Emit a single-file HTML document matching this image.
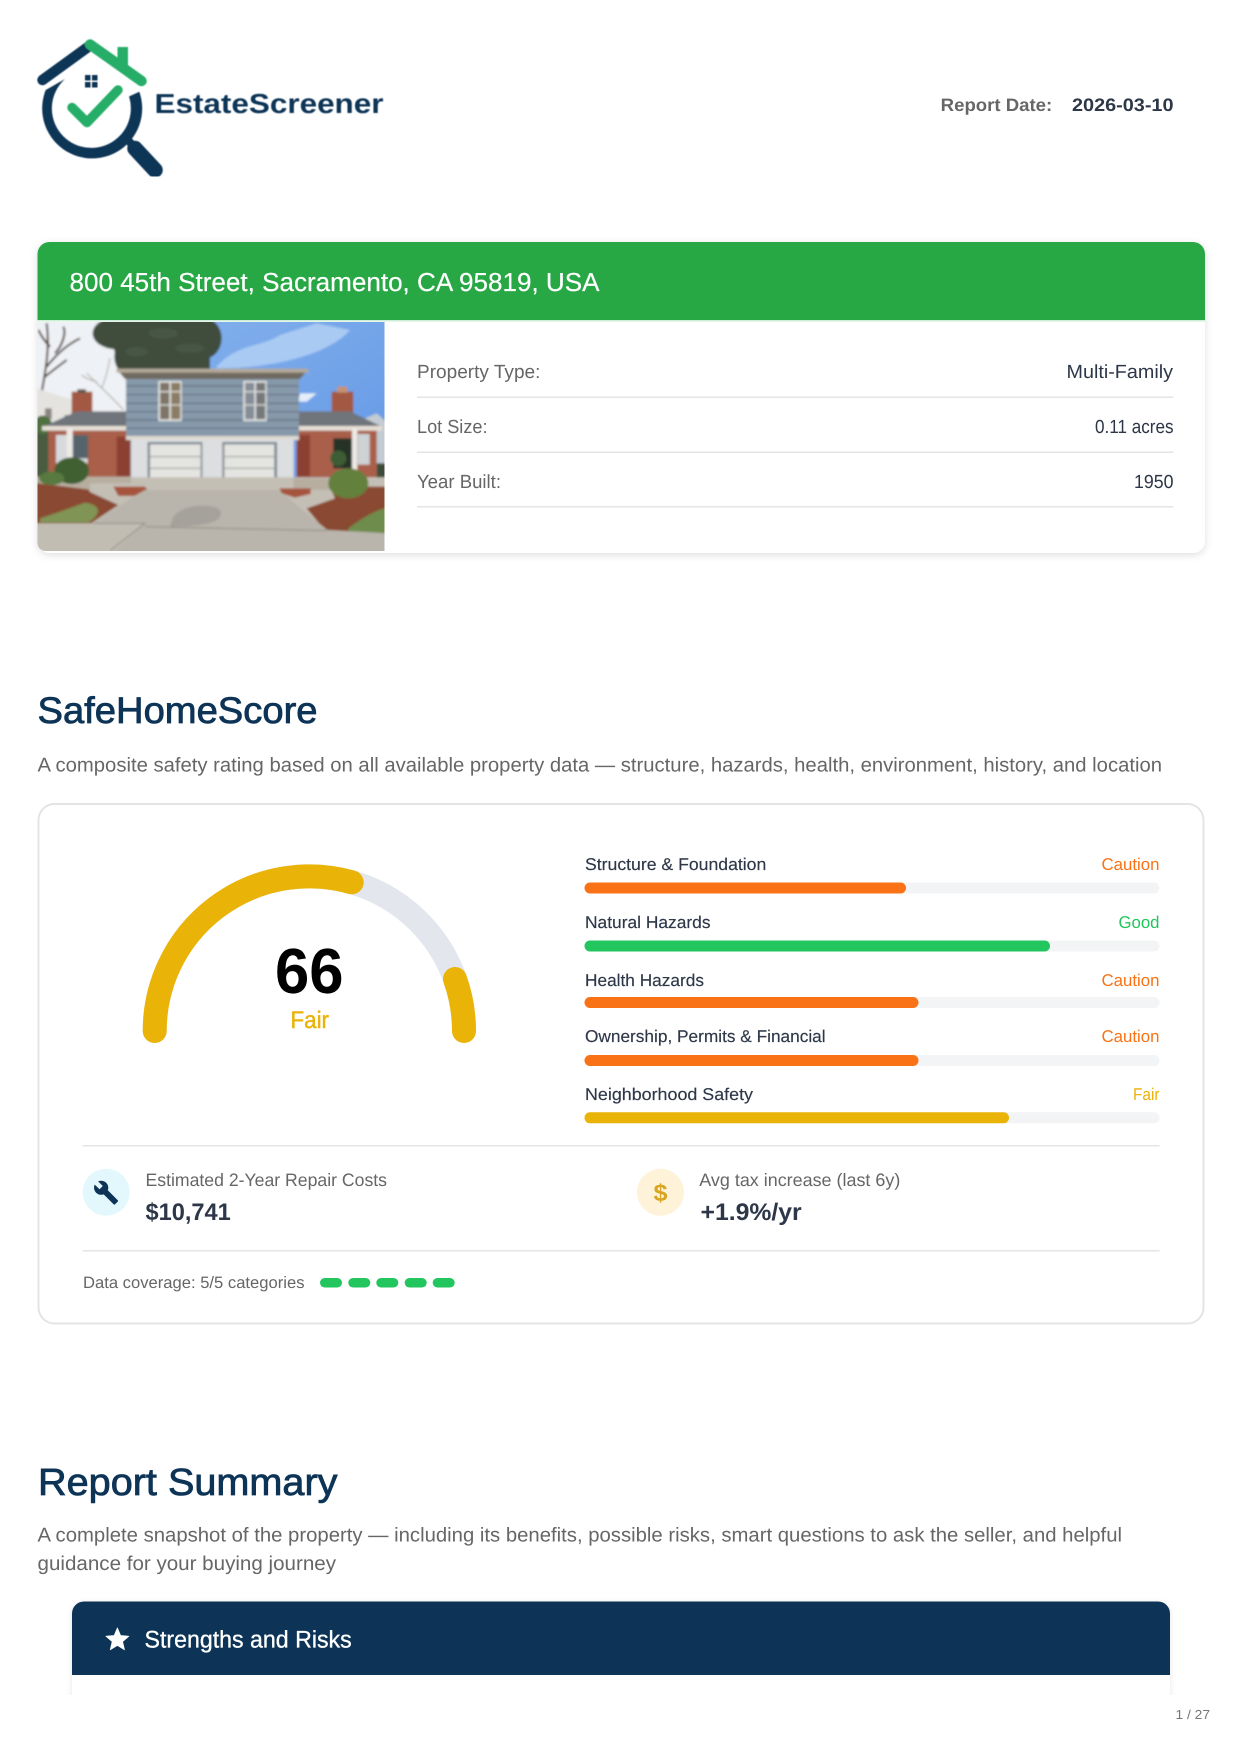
<!DOCTYPE html>
<html lang="en">
<head>
<meta charset="utf-8">
<title>EstateScreener Report</title>
<style>
html,body{margin:0;padding:0;background:#fff;width:1242px;height:1754px;overflow:hidden}
svg{display:block}
text{font-family:"Liberation Sans",Arial,sans-serif;text-rendering:geometricPrecision}
.semi{stroke-width:.45px;paint-order:stroke}
.title{stroke-width:.8px;paint-order:stroke}
</style>
</head>
<body>
<svg xmlns="http://www.w3.org/2000/svg" width="1242" height="1754" viewBox="0 0 1242 1754">
<defs>
  <filter id="soft" x="-5%" y="-5%" width="110%" height="110%"><feGaussianBlur stdDeviation=".45"/></filter>
  <filter id="photoBlur" x="0" y="0" width="100%" height="100%"><feGaussianBlur stdDeviation="1"/></filter>
  <filter id="shadow" x="-5%" y="-10%" width="110%" height="120%"><feDropShadow dx="0" dy="2" stdDeviation="4" flood-color="#000" flood-opacity=".13"/></filter>
  <filter id="shadow2" x="-5%" y="-10%" width="110%" height="120%"><feDropShadow dx="0" dy="1" stdDeviation="3" flood-color="#000" flood-opacity=".10"/></filter>
  <clipPath id="photoClip"><path d="M37.500 322H384.500V551H45.500a8 8 0 0 1-8-8Z"/></clipPath>
  <clipPath id="pageClip"><rect x="0" y="0" width="1242" height="1695"/></clipPath>
  <linearGradient id="sky" x1="0" y1="0" x2="1" y2="1"><stop offset="0" stop-color="#8db7ee"/><stop offset="1" stop-color="#5b93e4"/></linearGradient>
</defs>

<!-- Logo -->
<g filter="url(#soft)">
  <path d="M65 79L45.700 90A50 50 0 1 0 139.300 91.700L129 96.500A39.500 39.500 0 1 1 65 79Z" fill="#0f3557"/>
  <path d="M42.500 80L88 47" fill="none" stroke="#0f3557" stroke-width="10.500" stroke-linecap="round"/>
  <path d="M90 44.500L141.500 81" fill="none" stroke="#27ae68" stroke-width="10.500" stroke-linecap="round"/>
  <path d="M117.500 47H128V67H117.500Z" fill="#27ae68"/>
  <path d="M85 75h5.500v5.500H85ZM92 75h5.500v5.500H92ZM85 82h5.500v5.500H85ZM92 82h5.500v5.500H92Z" fill="#0f3557"/>
  <path d="M72 107.500L87 122.500L118 90" fill="none" stroke="#27ae68" stroke-width="9.500" stroke-linecap="round" stroke-linejoin="round"/>
  <path d="M127 139L136 149" stroke="#0f3557" stroke-width="8" fill="none"/>
  <path d="M135 148.500L155 170" stroke="#0f3557" stroke-width="15.500" stroke-linecap="round" fill="none"/>
  <text x="154.500" y="113" font-size="27.500" font-weight="700" fill="#0f3557" textLength="229" lengthAdjust="spacingAndGlyphs">EstateScreener</text>
</g>

<!-- Report date -->
<text x="940.700" y="111" font-size="18" font-weight="700" fill="#666" textLength="111.500" lengthAdjust="spacingAndGlyphs">Report Date:</text>
<text x="1072" y="111" font-size="18" font-weight="700" fill="#2d3748" textLength="101.500" lengthAdjust="spacingAndGlyphs">2026-03-10</text>

<!-- Property card -->
<rect x="37.500" y="242" width="1167.500" height="311" rx="12" fill="#fff" filter="url(#shadow)"/>
<path d="M49.500 242H1193a12 12 0 0 1 12 12V320H37.500V254a12 12 0 0 1 12-12Z" fill="#28a745"/>
<rect x="37.500" y="320" width="1167.500" height="1.500" fill="#cdeed6"/>
<text x="69.500" y="291" font-size="26" fill="#fff" stroke="#fff" stroke-width=".2" textLength="530" lengthAdjust="spacingAndGlyphs">800 45th Street, Sacramento, CA 95819, USA</text>

<!-- Photo -->
<g clip-path="url(#photoClip)">
 <g filter="url(#photoBlur)">
 <g transform="translate(30 310) scale(.33333)">
  <rect x="10" y="25" width="1070" height="710" fill="url(#sky)"/>
  <path d="M10 25H330L300 330H10Z" fill="#eef1f5"/>
  <path d="M560 170C620 100 700 110 750 75L860 40L960 60C900 130 740 175 560 175Z" fill="#a9caf3"/>
  <path d="M810 250H860L830 275H805Z" fill="#e4eefb"/>
  <!-- evergreen tree -->
  <g fill="#3f4e3d">
    <ellipse cx="260" cy="70" rx="72" ry="48"/>
    <ellipse cx="340" cy="100" rx="90" ry="85"/>
    <ellipse cx="440" cy="90" rx="105" ry="95"/>
    <ellipse cx="520" cy="85" rx="55" ry="62"/>
    <ellipse cx="285" cy="140" rx="32" ry="48"/>
    <rect x="270" y="130" width="270" height="55"/>
  </g>
  <g fill="#566651" opacity=".35">
    <ellipse cx="400" cy="70" rx="44" ry="16"/>
    <ellipse cx="480" cy="115" rx="44" ry="14"/>
    <ellipse cx="320" cy="125" rx="34" ry="14"/>
  </g>
  <!-- bare trees -->
  <path d="M28 290C40 210 62 130 50 40M50 170C90 120 120 100 150 85M60 110C40 90 30 70 25 60M45 200C70 180 90 165 110 150M75 130C95 110 110 70 100 50" stroke="#4a3a32" stroke-width="6" fill="none"/>
  <path d="M170 190C210 230 250 265 280 300M215 235C230 200 235 170 240 145M200 215C180 210 165 205 155 195" stroke="#a9a29c" stroke-width="3" fill="none"/>
  <!-- left white house -->
  <path d="M10 232L125 268V345H10Z" fill="#e4e3e0"/>
  <rect x="45" y="295" width="20" height="32" fill="#8a8581"/>
  <rect x="104" y="315" width="16" height="20" fill="#8a8581"/>
  <!-- chimneys -->
  <rect x="125" y="245" width="62" height="85" fill="#a25842"/>
  <rect x="142" y="238" width="26" height="10" fill="#5c5650"/>
  <rect x="905" y="245" width="65" height="80" fill="#a25842"/>
  <rect x="922" y="230" width="30" height="18" fill="#c99070"/>
  <!-- distant right -->
  <path d="M970 340L1040 310L1080 345V540H1000Z" fill="#c3cbd3"/>
  <rect x="1040" y="460" width="30" height="60" fill="#3e4c38"/>
  <!-- far left greenery -->
  <rect x="10" y="345" width="50" height="175" fill="#4a5c40"/>
  <circle cx="38" cy="345" r="28" fill="#4f7040"/>
  <!-- side roofs -->
  <path d="M40 350L140 304H295V350Z" fill="#70747c"/>
  <path d="M800 304H960L1055 350H800Z" fill="#70747c"/>
  <rect x="36" y="348" width="255" height="14" fill="#e6dfd6"/>
  <rect x="800" y="348" width="256" height="14" fill="#e6dfd6"/>
  <!-- brick -->
  <rect x="55" y="362" width="240" height="140" fill="#a95e48"/>
  <rect x="800" y="362" width="240" height="140" fill="#a95e48"/>
  <rect x="78" y="375" width="95" height="85" fill="#d7dadd"/>
  <rect x="128" y="375" width="46" height="70" fill="#55636b"/>
  <rect x="260" y="380" width="42" height="120" fill="#8c4030"/>
  <rect x="800" y="375" width="40" height="125" fill="#8c4030"/>
  <rect x="910" y="385" width="58" height="90" fill="#263227"/>
  <rect x="983" y="372" width="36" height="92" fill="#cdd2d5"/>
  <rect x="110" y="356" width="18" height="130" fill="#eceae5"/>
  <rect x="966" y="356" width="16" height="125" fill="#eceae5"/>
  <!-- upper storey -->
  <rect x="288" y="200" width="519" height="180" fill="#8699aa"/>
  <path d="M288 228H807M288 254H807M288 280H807M288 305H807M288 330H807M288 355H807" stroke="#5f6f7f" stroke-width="3.500"/>
  <path d="M260 177H835L810 207H285Z" fill="#6f6a60"/>
  <rect x="260" y="176" width="575" height="12" fill="#b3a998"/>
  <rect x="288" y="378" width="519" height="12" fill="#ded9d0"/>
  <!-- windows -->
  <rect x="385" y="213" width="70" height="120" fill="#e7e7e5"/>
  <rect x="390" y="218" width="28" height="110" fill="#7d7568"/>
  <rect x="423" y="218" width="28" height="110" fill="#8a7c66"/>
  <rect x="640" y="213" width="70" height="120" fill="#e7e7e5"/>
  <rect x="645" y="218" width="28" height="110" fill="#858d96"/>
  <rect x="678" y="218" width="28" height="110" fill="#76797c"/>
  <path d="M390 245H451M390 285H451M645 245H706M645 285H706" stroke="#dcdcd8" stroke-width="4"/>
  <!-- garage -->
  <rect x="303" y="388" width="488" height="152" fill="#dcdee0"/>
  <rect x="353" y="396" width="164" height="144" fill="#78858f"/>
  <rect x="360" y="403" width="152" height="134" fill="#e4e4e0"/>
  <rect x="577" y="396" width="164" height="144" fill="#78858f"/>
  <rect x="583" y="403" width="150" height="134" fill="#e4e4e0"/>
  <path d="M360 440H512M360 475H512M360 510H512M583 440H733M583 475H733M583 510H733" stroke="#a9adb0" stroke-width="4"/>
  <!-- steps and ground -->
  <rect x="10" y="502" width="1070" height="233" fill="#c4bfb5"/>
  <path d="M10 500H303V520H180V545H10Z" fill="#b7aea0"/>
  <path d="M790 505H900V540H790Z" fill="#b7aea0"/>
  <path d="M10 518L175 538L180 546L265 585L180 642H10Z" fill="#8a4a32"/>
  <path d="M30 625C70 612 120 595 165 578C215 585 215 612 175 638H30Z" fill="#7f9454"/>
  <path d="M900 530H1080V680H900L830 595L915 565Z" fill="#8a4a32"/>
  <path d="M955 655C995 625 1035 600 1080 590V680H955Z" fill="#6e8c4c"/>
  <path d="M250 530H345L355 545L310 558H265Z" fill="#a6553c"/>
  <path d="M748 535H842V552L795 563L755 550Z" fill="#a6553c"/>
  <path d="M345 540H745L892 660L1080 670V735H10V640H190L310 560Z" fill="#b9b5ac"/>
  <path d="M430 620C460 580 550 580 570 600C585 635 530 650 420 650Z" fill="#a5a29b"/>
  <path d="M10 640H345L240 735H10Z" fill="#c2bdb3"/>
  <path d="M190 640H345L240 722M345 650L890 662" stroke="#8d8a82" stroke-width="3" fill="none"/>
  <!-- bushes -->
  <ellipse cx="125" cy="482" rx="52" ry="40" fill="#3f6032"/>
  <ellipse cx="65" cy="505" rx="38" ry="20" fill="#58793f"/>
  <ellipse cx="955" cy="520" rx="60" ry="45" fill="#64803c"/>
  <circle cx="925" cy="445" r="24" fill="#3c5d36"/>
 </g>
 </g>
</g>

<!-- Property rows -->
<g font-size="19" fill="#666">
  <text x="417" y="378" textLength="123.400" lengthAdjust="spacingAndGlyphs">Property Type:</text>
  <text x="417" y="433" textLength="70.500" lengthAdjust="spacingAndGlyphs">Lot Size:</text>
  <text x="417" y="488" textLength="84" lengthAdjust="spacingAndGlyphs">Year Built:</text>
</g>
<g font-size="19" fill="#2d3748">
  <text x="1066.500" y="378" textLength="106.500" lengthAdjust="spacingAndGlyphs">Multi-Family</text>
  <text x="1095" y="433" textLength="78.500" lengthAdjust="spacingAndGlyphs">0.11 acres</text>
  <text x="1134" y="488" textLength="39.500" lengthAdjust="spacingAndGlyphs">1950</text>
</g>
<g fill="#e3e4e6">
  <rect x="417" y="396.500" width="756.500" height="1.500"/>
  <rect x="417" y="451.500" width="756.500" height="1.500"/>
  <rect x="417" y="506" width="756.500" height="1.500"/>
</g>

<!-- SafeHomeScore -->
<text x="37.500" y="723" font-size="37" fill="#0d3456" stroke="#0d3456" class="title" textLength="280" lengthAdjust="spacingAndGlyphs">SafeHomeScore</text>
<text x="37.500" y="771.500" font-size="20" fill="#666" textLength="1124.500" lengthAdjust="spacingAndGlyphs">A composite safety rating based on all available property data — structure, hazards, health, environment, history, and location</text>

<rect x="38.500" y="804" width="1165" height="519.500" rx="16" fill="#fff" stroke="#e3e4e6" stroke-width="2"/>

<!-- Gauge -->
<path d="M154.700 1031A154.650 154.650 0 0 1 464 1031" fill="none" stroke="#e3e7ed" stroke-width="24"/>
<path d="M154.700 1031A154.650 154.650 0 0 1 351.700 882.300" fill="none" stroke="#eab308" stroke-width="24" stroke-linecap="round"/>
<path d="M464 1031A154.650 154.650 0 0 0 455 979" fill="none" stroke="#eab308" stroke-width="24" stroke-linecap="round"/>
<text x="275" y="993" font-size="64" font-weight="700" fill="#000" textLength="68.500" lengthAdjust="spacingAndGlyphs">66</text>
<text x="290.500" y="1028" font-size="24" fill="#eab308" stroke="#eab308" class="semi" textLength="38.500" lengthAdjust="spacingAndGlyphs">Fair</text>

<!-- Bars -->
<g fill="#f3f4f6">
  <rect x="584.500" y="882.500" width="575" height="11" rx="5.500"/>
  <rect x="584.500" y="940.500" width="575" height="11" rx="5.500"/>
  <rect x="584.500" y="997" width="575" height="11" rx="5.500"/>
  <rect x="584.500" y="1055" width="575" height="11" rx="5.500"/>
  <rect x="584.500" y="1112.300" width="575" height="11" rx="5.500"/>
</g>
<rect x="584.500" y="882.500" width="321.500" height="11" rx="5.500" fill="#f97316"/>
<rect x="584.500" y="940.500" width="465.500" height="11" rx="5.500" fill="#22c55e"/>
<rect x="584.500" y="997" width="334" height="11" rx="5.500" fill="#f97316"/>
<rect x="584.500" y="1055" width="334" height="11" rx="5.500" fill="#f97316"/>
<rect x="584.500" y="1112.300" width="424.500" height="11" rx="5.500" fill="#eab308"/>
<g font-size="17" fill="#2d3748" stroke="#2d3748" stroke-width=".15">
  <text x="585" y="870" textLength="181.300" lengthAdjust="spacingAndGlyphs">Structure &amp; Foundation</text>
  <text x="585" y="928" textLength="125.500" lengthAdjust="spacingAndGlyphs">Natural Hazards</text>
  <text x="585" y="986" textLength="119" lengthAdjust="spacingAndGlyphs">Health Hazards</text>
  <text x="585" y="1042" textLength="240.600" lengthAdjust="spacingAndGlyphs">Ownership, Permits &amp; Financial</text>
  <text x="585" y="1100" textLength="168" lengthAdjust="spacingAndGlyphs">Neighborhood Safety</text>
</g>
<g font-size="17">
  <text x="1101.500" y="870" fill="#f97316" textLength="58" lengthAdjust="spacingAndGlyphs">Caution</text>
  <text x="1118.500" y="928" fill="#22c55e" textLength="41" lengthAdjust="spacingAndGlyphs">Good</text>
  <text x="1101.500" y="986" fill="#f97316" textLength="58" lengthAdjust="spacingAndGlyphs">Caution</text>
  <text x="1101.500" y="1042" fill="#f97316" textLength="58" lengthAdjust="spacingAndGlyphs">Caution</text>
  <text x="1133" y="1100" fill="#eab308" textLength="26.500" lengthAdjust="spacingAndGlyphs">Fair</text>
</g>

<!-- Dividers -->
<rect x="82.700" y="1145" width="1076.800" height="1.500" fill="#e3e4e6"/>
<rect x="82.700" y="1250" width="1076.800" height="1.500" fill="#e3e4e6"/>

<!-- Metrics -->
<circle cx="106.200" cy="1192.200" r="23.500" fill="#e3f8fc"/>
<g transform="translate(93 1179.500) scale(1.090)"><path d="M22.700 19l-9.100-9.100c.9-2.300.4-5-1.500-6.900-2-2-5-2.400-7.400-1.300L9 6 6 9 1.600 4.700C.4 7.100.9 10.100 2.900 12.100c1.900 1.900 4.600 2.400 6.900 1.500l9.100 9.100c.4.400 1 .4 1.400 0l2.300-2.300c.5-.4.500-1.100.1-1.400z" fill="#0d3456"/></g>
<text x="145.500" y="1186" font-size="18" fill="#666" textLength="241.500" lengthAdjust="spacingAndGlyphs">Estimated 2-Year Repair Costs</text>
<text x="145.500" y="1220" font-size="24" font-weight="700" fill="#2d3748" textLength="85.200" lengthAdjust="spacingAndGlyphs">$10,741</text>

<circle cx="660.500" cy="1192.300" r="23.500" fill="#fef3d9"/>
<text x="653.500" y="1201" font-size="24" font-weight="700" fill="#d9a520" textLength="14" lengthAdjust="spacingAndGlyphs">$</text>
<text x="699.300" y="1186" font-size="18" fill="#666" textLength="201" lengthAdjust="spacingAndGlyphs">Avg tax increase (last 6y)</text>
<text x="700.500" y="1220" font-size="24" font-weight="700" fill="#2d3748" textLength="101.200" lengthAdjust="spacingAndGlyphs">+1.9%/yr</text>

<!-- Data coverage -->
<text x="83" y="1288" font-size="16.500" fill="#666" textLength="221.500" lengthAdjust="spacingAndGlyphs">Data coverage: 5/5 categories</text>
<g fill="#22c55e">
  <rect x="320" y="1278" width="22" height="9.500" rx="4.750"/>
  <rect x="348.300" y="1278" width="22" height="9.500" rx="4.750"/>
  <rect x="376.300" y="1278" width="22" height="9.500" rx="4.750"/>
  <rect x="404.700" y="1278" width="22" height="9.500" rx="4.750"/>
  <rect x="432.700" y="1278" width="22" height="9.500" rx="4.750"/>
</g>

<!-- Report Summary -->
<text x="38" y="1495" font-size="38" fill="#0d3456" stroke="#0d3456" class="title" textLength="299.500" lengthAdjust="spacingAndGlyphs">Report Summary</text>
<text x="37.500" y="1541.500" font-size="20" fill="#666" textLength="1084.500" lengthAdjust="spacingAndGlyphs">A complete snapshot of the property — including its benefits, possible risks, smart questions to ask the seller, and helpful</text>
<text x="37.500" y="1570" font-size="20" fill="#666" textLength="298.500" lengthAdjust="spacingAndGlyphs">guidance for your buying journey</text>

<g clip-path="url(#pageClip)">
  <rect x="72" y="1601.500" width="1098" height="200" rx="12" fill="#fff" filter="url(#shadow2)"/>
  <path d="M84 1601.500H1158a12 12 0 0 1 12 12V1675H72V1613.500a12 12 0 0 1 12-12Z" fill="#0d3456"/>
  <g transform="translate(103.400 1625.400) scale(1.165)"><path d="M12 17.270L18.180 21l-1.640-7.030L22 9.240l-7.190-.61L12 2 9.190 8.630 2 9.240l5.460 4.730L5.820 21z" fill="#fff" stroke="#fff" stroke-width=".5" stroke-linejoin="round"/></g>
  <text x="144.500" y="1647.300" font-size="24" fill="#fff" stroke="#fff" stroke-width=".3" textLength="207.200" lengthAdjust="spacingAndGlyphs">Strengths and Risks</text>
</g>

<!-- Footer -->
<text x="1175.500" y="1719" font-size="13" fill="#777" textLength="34.500" lengthAdjust="spacingAndGlyphs">1 / 27</text>
</svg>
</body>
</html>
